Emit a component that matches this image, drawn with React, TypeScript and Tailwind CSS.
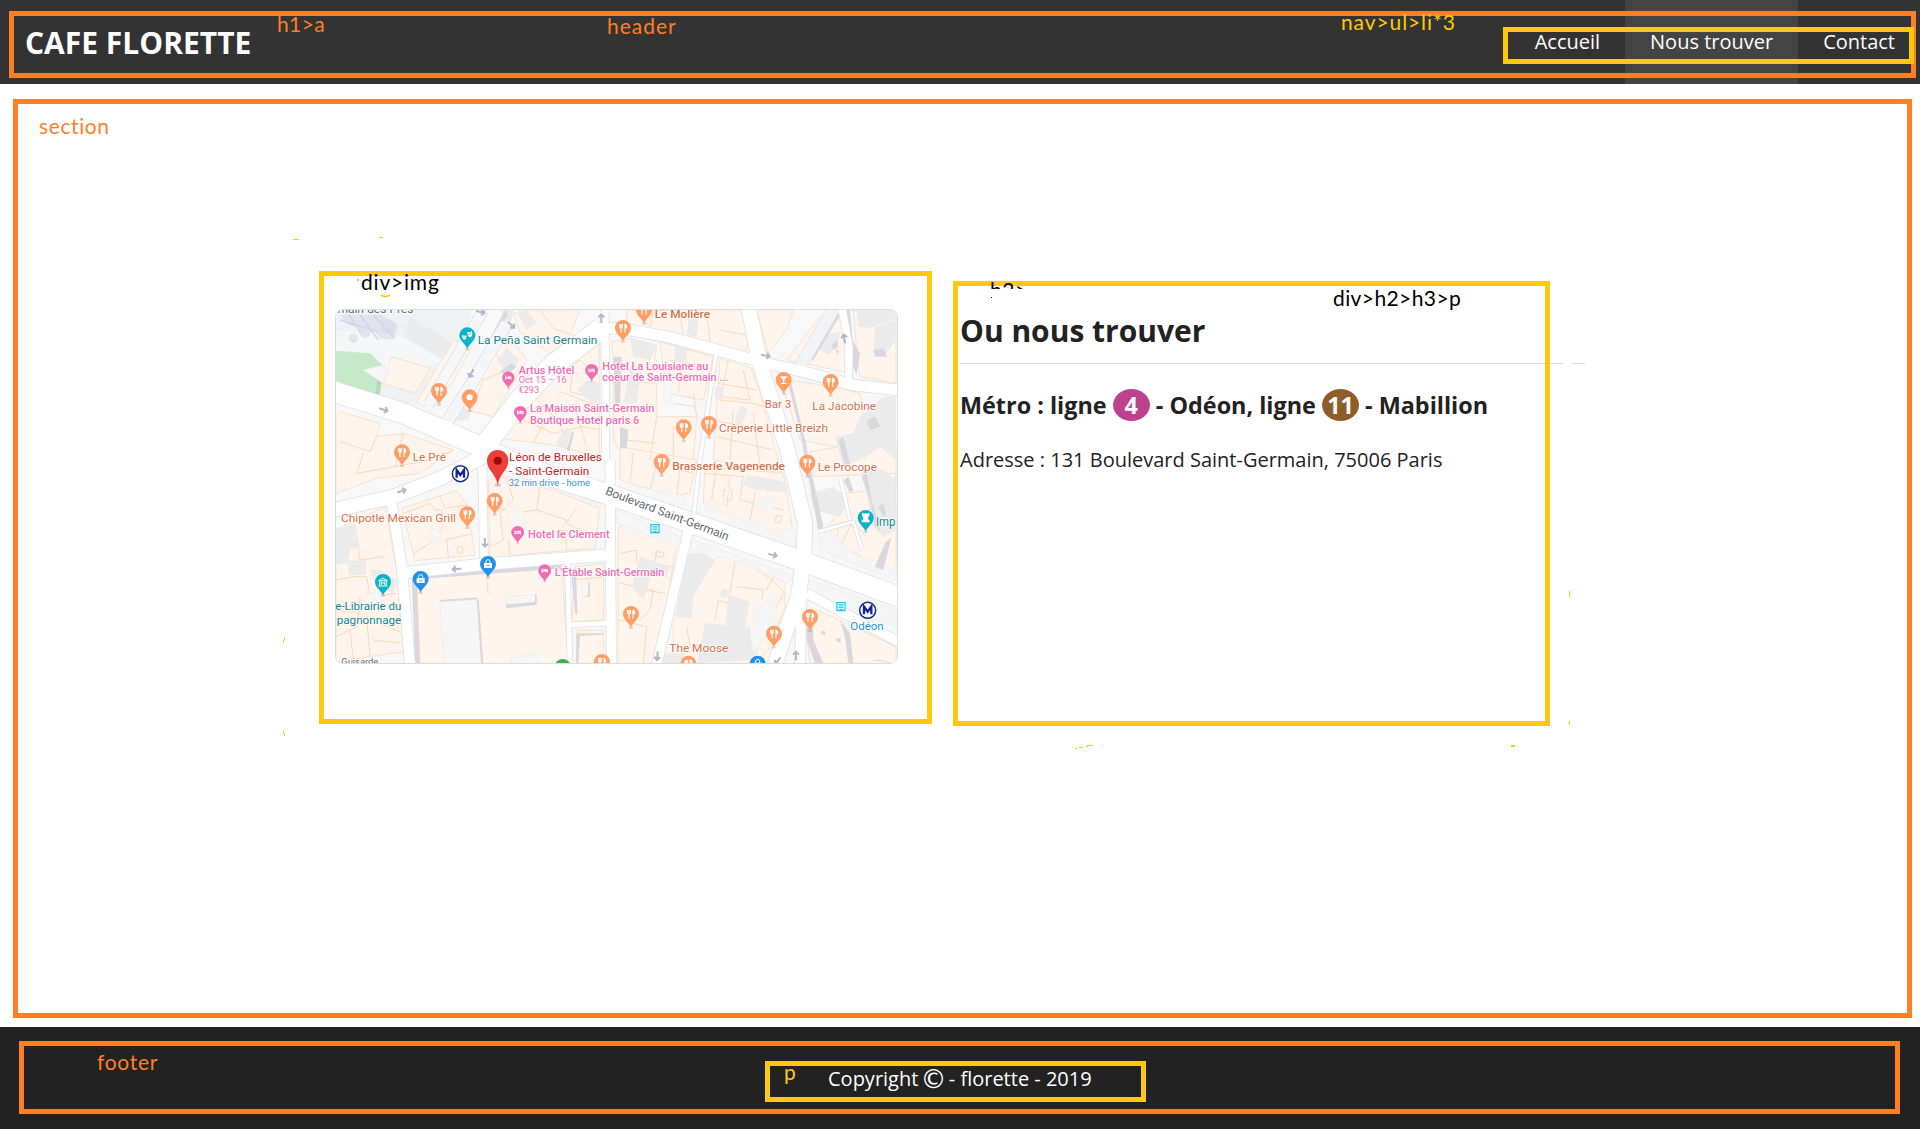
import React from "react";

/* ---------- Map drawing ---------- */

const ORANGE = "#ff9e67";
const BROWN = "#d2714f";
const PINK = "#f06db3";
const TEAL = "#12858f";

const peach = [
  "215,290 330,325 285,400 190,370", "400,240 455,262 395,372 310,440 290,425", "580,160 620,150 780,150 740,245 690,280 600,215",
  "500,260 585,250 620,300 520,470 400,440 450,340", "60,455 180,490 170,530 250,520 400,570 300,640 170,655 48,700 48,470",
  "800,240 838,220 838,330 770,320 740,290", "700,355 780,300 838,345 838,590 700,555 540,535 590,450",
  "875,245 930,235 1010,255 1000,330 900,330 880,300", "1020,245 1180,290 1150,420 1040,400", "920,150 1265,150 1285,240 1275,280 1100,235 920,190",
  "1200,295 1295,325 1320,400 1385,640 1180,600", "880,360 1010,370 1010,470 1130,470 1120,600 920,600 880,540",
  "1310,150 1420,150 1400,210 1345,280", "1500,170 1550,150 1580,250 1590,340 1500,320 1400,300", "1600,150 1728,150 1728,370 1620,350 1610,270",
  "1380,355 1560,385 1620,400 1640,520 1540,560 1440,540", "1470,575 1560,560 1728,560 1728,640 1480,650",
  "900,560 1130,600 1110,700 1060,708 900,660", "1155,620 1390,640 1420,820 1390,830 1150,735",
  "505,660 560,650 710,695 840,745 825,865 640,880 510,895", "245,745 410,692 440,735 465,885 285,902",
  "48,810 195,740 230,930 250,1175 48,1205", "290,950 725,920 745,1210 300,1210", "765,920 850,910 850,1080 755,1085", "770,1110 850,1110 850,1210 770,1210",
  "895,800 930,790 1070,855 1060,900 1020,1210 895,1210", "1190,890 1280,900 1395,965 1395,1040 1345,1170 1300,1210 1060,1210 1060,1090",
  "1580,700 1660,690 1728,730 1728,940 1660,920 1610,880 1520,860 1510,830", "1490,1050 1560,1080 1728,1160 1728,1210 1470,1210 1460,1120",
];

const parcels = [
  "60,545 150,575 170,530", "130,580 110,640 225,620 250,520", "225,620 330,600 400,570", "520,270 560,330 490,360 450,340", "490,360 455,450",
  "610,455 690,370 720,330", "640,405 720,490 740,565", "720,395 838,440", "760,325 750,395 838,420", "670,490 640,550", "760,430 800,560", "610,480 700,520 790,500 838,510",
  "660,150 700,205 770,230", "975,150 980,195", "1080,160 1090,230", "1160,150 1170,250", "990,200 1000,155 1040,150", "1200,210 1280,225",
  "1225,300 1200,420 1300,430 1330,440", "1195,370 1310,390", "1240,450 1230,600", "1300,460 1320,620", "1190,530 1360,570", "1270,330 1290,420 1200,410",
  "1050,300 1160,320", "1090,255 1075,400", "1120,400 1130,470", "1060,430 1130,440", "1010,470 990,600", "1060,500 1060,600", "920,540 1010,550", "1170,480 1280,500 1360,520",
  "1155,640 1270,650 1260,720 1390,750", "1190,620 1175,720", "1230,650 1220,740", "1305,700 1290,780", "1210,690 1235,690 1235,720 1210,720 1210,690", "1370,765 1385,770 1380,790 1365,785 1370,765",
  "1010,610 990,690", "940,580 930,670", "1120,640 1080,630 1070,708",
  "360,710 375,745 440,735", "250,760 330,730 345,750 365,750 370,800 330,850 280,880", "375,840 460,820", "380,840 385,890", "412,860 427,860 427,880 412,880 412,860",
  "560,655 580,720 540,760 550,840 510,860", "660,680 650,750 580,760", "770,740 740,790 820,830", "640,830 735,810 740,870", "510,740 560,750", "565,840 570,885", "650,750 740,780 725,805",
  "110,830 120,900 190,890", "48,960 100,950 140,950 150,1010 230,1000", "120,1010 110,1100 48,1130", "180,1090 250,1120", "90,1110 100,1200", "140,1070 150,1190", "200,950 240,990", "48,1050 120,1060", "160,1140 245,1150",
  "900,880 950,870 950,910 1060,920", "900,970 1000,990 990,1050 960,1080", "1010,870 1000,940", "1010,875 1032,878 1028,892 1008,890 1010,875", "975,990 1035,1000", "900,1080 980,1100 970,1210",
  "1245,905 1225,1030 1195,1020 1185,1080", "1250,980 1330,990 1325,1020", "1310,930 1350,955 1395,1000", "1395,965 1360,950 1340,990", "1390,1000 1350,1080", "1170,1090 1170,1210", "1100,1100 1110,1160 1160,1150",
  "1550,830 1560,790 1610,800 1640,830", "1560,860 1590,800", "1670,690 1690,800", "765,960 850,950", "500,960 505,1000",
];

const grey = [
  "270,170 400,250 370,300 250,230", "530,300 560,265 600,300 560,345", "590,160 620,150 650,190 620,210", "930,235 1010,255 990,300 940,290", "1110,150 1138,150 1130,230 1100,225", "1063,230 1105,240 1098,315 1065,305",
  "770,390 800,360 838,370 830,440", "705,550 740,500 755,515 735,570", "930,330 965,330 950,430 910,430", "1185,380 1210,380 1210,415 1185,415", "1250,460 1265,435 1285,450 1260,500 1245,490",
  "1480,260 1500,225 1560,215 1555,250 1530,285", "1665,200 1728,180 1728,240 1700,280 1660,275", "1610,150 1728,150 1728,175 1650,205 1615,200", "1545,530 1600,520 1620,470 1690,410 1728,405 1728,600 1680,560 1640,590 1570,620",
  "1280,645 1320,650 1390,665 1402,698 1310,690 1270,675", "1470,700 1540,680 1590,720 1560,770 1480,750", "1620,620 1690,630 1728,660 1728,810 1690,830 1650,790 1640,700", "1500,820 1530,805 1545,830 1510,838",
  "48,810 105,790 120,860 90,870 85,910 48,915", "85,900 138,902 138,945 85,945", "420,430 450,460 445,480 400,485", "960,890 1050,920 1040,950 995,945 970,1020 935,980", "1105,880 1150,880 1185,900 1155,950 1120,1010 1115,1075 1065,1070",
  "1205,985 1228,990 1220,1015 1200,1010", "1225,1005 1290,1025 1275,1100 1340,1110 1300,1200 1130,1210 1155,1090 1215,1095", "1030,1180 1095,1180 1085,1210 1030,1210", "150,930 180,930 230,960 220,1000 170,980", "545,150 580,150 575,180 550,190",
];

const pale = [
  "360,1025 475,1018 488,1210 370,1210", "558,1010 645,1003 645,1035 558,1045", "570,1195 655,1180 655,1210 570,1210", "785,965 808,965 808,1010 788,1010",
  "900,670 1100,710 1080,755 900,680", "1145,730 1370,820 1420,800 1430,860 1370,850 1130,770", "1490,770 1500,870 1728,960 1728,920 1600,885", "1470,960 1728,1050 1728,1100 1600,1060 1468,1005",
  "620,610 838,700 845,740 700,690", "890,750 1080,830 1070,860 890,790", "1120,840 1425,950 1400,970 1280,910 1110,870", "1300,730 1345,710 1330,675 1360,730 1355,750",
  "130,330 210,310 190,370", "330,800 365,820 360,845 330,850", "720,400 745,420 725,450 710,440", "1035,340 1060,350 1050,430 1030,420", "1205,740 1230,690 1220,680",
  "140,1000 180,1000 190,1035 150,1040", "560,760 600,740 620,790 580,800", "1285,1090 1325,1040 1345,1010 1375,1050 1350,1110 1300,1180",
];

const shadows = [
  "555,150 565,165 510,235", "1445,300 1480,300 1570,150 1560,150", "1680,1200 1728,1210 1650,1200", "1585,290 1610,345 1620,280 1598,240 1590,150 1580,150", "1448,560 1495,810 1510,800 1475,640 1455,540",
  "1570,660 1585,650 1600,690 1590,700", "1625,650 1650,720 1665,800 1680,810 1655,720 1640,640", "1450,1110 1485,1210 1510,1210 1480,1140 1478,1040", "1560,1080 1590,1120 1600,1210 1585,1210 1575,1130",
  "558,1033 645,1026 645,1003 650,1003 650,1034 558,1045", "360,1025 475,1018 470,1012 360,1020", "470,1020 483,1210 490,1210 476,1018", "275,950 550,915 725,915 725,925 290,958 300,1210 285,1210", "753,930 765,1060 772,1065 768,925",
  "770,1120 850,1120 850,1124 780,1128 775,1210 768,1210", "788,1010 810,1010 810,968 805,968 805,1005", "880,290 905,290 900,430 885,430", "740,570 756,515 762,520 748,575", "900,500 925,510 920,565 900,565", "1400,350 1412,360 1460,560 1450,560",
  "1555,540 1575,615 1590,612 1570,530", "1660,270 1690,265 1700,290 1665,290", "1535,255 1550,240 1555,260 1540,270", "1545,268 1558,272 1552,282", "1640,480 1665,470 1680,500 1650,510", "1675,740 1690,730 1700,765 1690,770", "1665,920 1695,850 1715,830 1690,930", "1505,1112 1515,1114 1515,1126 1502,1122",
  "1550,1135 1562,1135 1562,1148 1550,1145", "540,335 575,310 590,320 560,345",
];

const roads: [string, number, string][] = [
  ["490,150 325,435", 30, "#f4f6f8"], ["560,190 455,370 375,495", 34, "#f4f6f8"], ["1545,140 1440,320", 34, "#f1f4f7"],
  ["1188,285 1167,420 1140,600 1118,790", 10, "#fff"], ["1565,140 1587,260 1585,380", 22, "#fff"], ["1495,815 1600,785 1625,865", 8, "#fff"], ["1590,780 1560,650", 8, "#fff"],
  ["742,905 750,1210", 14, "#fff"], ["748,1094 865,1090", 14, "#fff"], ["855,140 857,600", 22, "#fff"], ["870,600 874,1215", 28, "#fff"],
  ["487,620 492,900", 24, "#fff"], ["215,725 245,920 270,1215", 30, "#fff"], ["255,938 500,912 870,885", 34, "#fff"], ["40,750 220,710 350,660 500,585", 42, "#fff"],
  ["1110,790 1070,960 1010,1215", 28, "#fff"], ["1460,1000 1735,1145", 28, "#fff"],
  ["835,205 900,205 1050,232 1340,310 1450,335 1600,375 1735,390", 32, "#fff"], ["845,205 700,315 600,420 480,575", 62, "#fff"],
  ["1285,140 1322,320 1400,560 1455,790 1452,890 1435,1010 1395,1120 1365,1215", 44, "#fff"], ["1445,980 1440,1215", 30, "#fff"], ["1735,960 1728,640", 2, "#fff"],
  ["40,395 250,460 470,555 620,625 900,715 1450,905 1735,1010", 60, "#fff"],
];

type PinKind = "food" | "bar" | "dot" | "bed" | "mask" | "museum" | "rook" | "bag" | "plain";

function Glyph({ kind }: { kind: PinKind }) {
  switch (kind) {
    case "food":
      return (
        <g fill="none" stroke="#fff" strokeWidth="3.4">
          <path d="M-10-12v8q0 4 4 4t4-4v-8M-6-12V14" />
          <path d="M6 14V-11q6 1 5 10l-5 2" fill="#fff" />
        </g>
      );
    case "bar":
      return <path d="M-11-11H11L2 0V9H8V12H-8V9H-2V0Z" fill="#fff" />;
    case "dot":
      return <circle r="9" fill="#fff" />;
    case "bed":
      return (
        <g fill="#fff">
          <path d="M-12-8h3V2H9V-5h3V8H9V5H-9V8h-3Z" />
          <circle cx="-5" cy="-2" r="3" />
          <path d="M-1-6H6Q9-6 9-2V1H-1Z" />
        </g>
      );
    case "mask":
      return (
        <g fill="#fff">
          <path d="M-16-1Q-9 3-3 0V7Q-5 14-10 13Q-16 11-16-1Z" />
          <path d="M-1-11Q6-6 14-13L15-4Q14 6 7 6Q1 5-1-11Z" />
          <g fill="#08b4c6">
            <circle cx="-12" cy="5" r="1.6" />
            <circle cx="-7" cy="5" r="1.6" />
            <circle cx="5" cy="-3" r="1.6" />
            <circle cx="10" cy="-5" r="1.6" />
          </g>
        </g>
      );
    case "museum":
      return (
        <g fill="none" stroke="#fff" strokeWidth="3">
          <path d="M-13-4L0-12L13-4ZM-10-3V10M10-3V10M-14 12H14M-5 9V0L0 4L5 0V9" />
        </g>
      );
    case "rook":
      return <path d="M-11-15h5v4h3v-4h6v4h3v-4h5v10L7-3 9 7h3v6h-24V7h3L-7-3l-4-2Z" fill="#fff" />;
    case "bag":
      return (
        <g>
          <path d="M-12-3H12V12H-12Z" fill="#fff" />
          <path d="M-6-2V-8Q-5-13 0-13T6-8V-2" fill="none" stroke="#fff" strokeWidth="3" />
          <path d="M-5 3Q0 9 5 3" fill="none" stroke="#2491eb" strokeWidth="2.4" />
        </g>
      );
    default:
      return null;
  }
}

function Pin({ x, y, kind, fill, s = 1 }: { x: number; y: number; kind: PinKind; fill: string; s?: number }) {
  return (
    <g transform={`translate(${x} ${y}) scale(${s})`}>
      <ellipse cx="0" cy="41" rx="7" ry="4" fill="#000" opacity=".13" />
      <path d="M0 41C-3 28-24 17-24 0A24 24 0 0 1 24 0C24 17 3 28 0 41Z" fill={fill} />
      <Glyph kind={kind} />
    </g>
  );
}

const pins: [number, number, PinKind, string, number?][] = [
  [357, 393, "food", ORANGE], [449, 412, "dot", ORANGE], [246, 577, "food", ORANGE], [909, 204, "food", ORANGE], [972, 150, "food", ORANGE],
  [1391, 360, "bar", ORANGE], [1532, 366, "food", ORANGE], [1091, 502, "food", ORANGE], [1167, 492, "food", ORANGE], [1025, 606, "food", ORANGE],
  [1462, 608, "food", ORANGE], [524, 723, "food", ORANGE], [442, 763, "food", ORANGE], [933, 1062, "food", ORANGE], [1362, 1121, "food", ORANGE],
  [1470, 1071, "food", ORANGE], [1105, 1211, "food", ORANGE], [846, 1206, "food", ORANGE],
  [565, 353, "bed", PINK, 0.77], [815, 331, "bed", PINK, 0.8], [601, 457, "bed", PINK, 0.8], [593, 817, "bed", PINK, 0.8], [674, 932, "bed", PINK, 0.8],
  [442, 226, "mask", "#08b4c6"], [189, 966, "museum", "#08b4c6"], [1637, 774, "rook", "#08b4c6"],
  [302, 957, "bag", "#2491eb"], [504, 912, "bag", "#2491eb"], [1313, 1211, "bag", "#2491eb"], [728, 1221, "plain", "#3aaf4a"],
];

const arrows: [number, number, number][] = [
  [482, 156, 12], [574, 195, 45], [844, 175, -90], [454, 340, 120], [191, 449, 18], [245, 693, -18], [495, 848, 90], [410, 927, 178],
  [1337, 287, 10], [1573, 236, -100], [1358, 885, 14], [1012, 1188, 95], [1373, 1203, 130], [1428, 1187, -90],
];

const labels: [string, number, number, number, number, string, number][] = [
  ["main-des-Prés", 53, 158, 227, 33, "#5b6b75", 400],
  ["La Peña Saint Germain", 473, 251, 359, 35, TEAL, 400],
  ["Artus Hôtel", 596, 342, 167, 32, PINK, 500],
  ["Oct 15 – 16", 596, 370, 144, 29, PINK, 400],
  ["€293", 596, 399, 61, 29, PINK, 400],
  ["Hotel La Louisiane au", 847, 331, 318, 32, PINK, 500],
  ["coeur de Saint-Germain ...", 847, 363, 378, 32, PINK, 500],
  ["La Maison Saint-Germain", 630, 457, 373, 33, PINK, 500],
  ["Boutique Hotel paris 6", 630, 491, 328, 33, PINK, 500],
  ["Le Molière", 1004, 175, 166, 34, BROWN, 500],
  ["Bar 3", 1334, 444, 80, 34, BROWN, 400],
  ["La Jacobine", 1477, 451, 191, 34, BROWN, 400],
  ["Crêperie Little Breizh", 1197, 516, 327, 34, BROWN, 400],
  ["Brasserie Vagenende", 1057, 629, 338, 34, BROWN, 500],
  ["Le Procope", 1493, 632, 178, 35, BROWN, 400],
  ["Le Pré", 278, 602, 100, 34, BROWN, 400],
  ["Léon de Bruxelles", 567, 603, 279, 34, "#c4231f", 400],
  ["- Saint-Germain", 567, 645, 241, 34, "#c4231f", 400],
  ["32 min drive - home", 566, 678, 244, 27, "#3c8fd9", 400],
  ["Chipotle Mexican Grill", 63, 786, 345, 34, BROWN, 400],
  ["Hotel le Clement", 624, 834, 245, 33, PINK, 500],
  ["L'Étable Saint-Germain", 704, 948, 329, 33, PINK, 500],
  ["e-Librairie du", 46, 1050, 198, 35, TEAL, 400],
  ["pagnonnage", 50, 1091, 194, 35, TEAL, 400],
  ["Imp", 1668, 798, 58, 36, TEAL, 400],
  ["Odéon", 1591, 1110, 100, 34, "#1699cc", 400],
  ["The Moose", 1048, 1176, 177, 34, BROWN, 400],
  ["Guisarde", 64, 1216, 111, 28, "#5b6b75", 400],
];

function Metro({ x, y }: { x: number; y: number }) {
  return (
    <g transform={`translate(${x} ${y})`}>
      <circle r="24" fill="#fff" stroke="#12268c" strokeWidth="4.5" />
      <path d="M-11 12V-11L0 4L11-11V12" fill="none" stroke="#12268c" strokeWidth="7" />
    </g>
  );
}

function Bus({ x, y }: { x: number; y: number }) {
  return (
    <g transform={`translate(${x} ${y})`}>
      <path d="M-14-14H14V14H-14Z" fill="#1cc4f4" />
      <path d="M-9 10V-9H9V10M-9 5H9M-9-2H9M-6 9h2M4 9h2" fill="none" stroke="#fff" strokeWidth="3" />
    </g>
  );
}

function MapPicture() {
  return (
    <svg viewBox="48 150 1683 1059" preserveAspectRatio="none" className="block h-[353px] w-[561px]">
      <rect x="40" y="140" width="1700" height="1080" fill="#f7f8f7" />
      <path d="M48 150H455L430 250 290 440 48 362Z" fill="#f0f1f3" />
      <path d="M48 210L250 230 380 300 200 350 48 300Z" fill="#f5f6f8" />
      <g fill="#e3e3ef">
        <path d="M60 165H185L235 195 220 240 180 235 165 215 85 195Z" />
        <circle cx="135" cy="215" r="18" />
        <circle cx="100" cy="235" r="14" />
        <circle cx="205" cy="200" r="22" fill="#dcdcec" />
      </g>
      <path d="M60 180L175 215M85 160L120 215M120 165L175 240M160 165L225 235" stroke="#d2d3e4" strokeWidth="4" />
      <path d="M48 272L150 280 192 320 178 410 48 362Z" fill="#c5e8c9" />
      <path d="M192 320L178 410 165 405 178 312Z" fill="#b5d9bd" />
      <g fill="#fff5ec" stroke="#fce0c8" strokeWidth="3">
        {peach.map((p) => <polygon key={p} points={p} />)}
      </g>
      <g fill="none" stroke="#fbd9bb" strokeWidth="3">
        {parcels.map((p) => <polyline key={p} points={p} />)}
      </g>
      <g fill="#ebebec">{grey.map((p) => <polygon key={p} points={p} />)}</g>
      <g fill="#f5f6f5" stroke="#eceeed" strokeWidth="2">{pale.map((p) => <polygon key={p} points={p} />)}</g>
      <g fill="#d9d8de">{shadows.map((p) => <polygon key={p} points={p} />)}</g>
      <g fill="none" stroke="#dfe2e4" strokeLinejoin="round">
        {roads.map(([p, w]) => <polyline key={p} points={p} strokeWidth={w + 5} />)}
      </g>
      <g fill="none" strokeLinejoin="round">
        {roads.map(([p, w, c]) => <polyline key={p} points={p} strokeWidth={w} stroke={c} />)}
      </g>
      <g fill="none" stroke="#b1b7cf" strokeWidth="6">
        {arrows.map(([x, y, a]) => (
          <path key={`${x}-${y}`} transform={`translate(${x} ${y}) rotate(${a})`} d="M-14 0H10M3-9L12 0L3 9" />
        ))}
      </g>
      {pins.map(([x, y, kind, fill, s]) => <Pin key={`${x}-${y}`} x={x} y={y} kind={kind} fill={fill} s={s} />)}
      <Metro x={421} y={641} />
      <Metro x={1643} y={1051} />
      <Bus x={1005} y={806} />
      <Bus x={1563} y={1040} />
      <ellipse cx="533" cy="675" rx="9" ry="5" fill="#000" opacity=".2" />
      <path d="M533 676C529 640 501 632 501 602A32 32 0 0 1 565 602C565 632 537 640 533 676Z" fill="#ee3f37" />
      <circle cx="533" cy="602" r="12" fill="#9c0a10" />
      <g fontFamily="Roboto, sans-serif" stroke="#fff" strokeWidth="5" strokeOpacity=".85" strokeLinejoin="round" paintOrder="stroke">
        {labels.map(([t, x, y, w, size, fill, weight]) => (
          <text key={t} x={x} y={y} textLength={w} lengthAdjust="spacingAndGlyphs" fontSize={size} fontWeight={weight} fill={fill}>
            {t}
          </text>
        ))}
        <text transform="translate(854 702) rotate(20.8)" textLength="393" lengthAdjust="spacingAndGlyphs" fontSize="35" fill="#5b6b75">
          Boulevard Saint-Germain
        </text>
      </g>
    </svg>
  );
}

/* ---------- Page ---------- */

function Note({ className, children }: { className: string; children: React.ReactNode }) {
  return (
    <span
      className={`pointer-events-none block shrink-0 whitespace-nowrap font-['Lato',sans-serif] text-[21px] leading-6 [font-variant-ligatures:none] ${className}`}
    >
      {children}
    </span>
  );
}

/* Small pen strokes scattered around the two cards */
function Strokes() {
  return (
    <svg viewBox="0 0 1920 943" className="pointer-events-none absolute inset-0 h-full w-full" shapeRendering="crispEdges">
      <g fill="#ffc90e">
        <path d="M293 155h6v1h-6zM379 153h4v1h-4zM357 195h2v2h-2zM358 191h1v1h-1zM283 556h1v3h-1zM284 553h1v3h-1zM283 647h1v2h-1zM284 649h1v3h-1z" />
        <path d="M1569 507h1v6h-1zM1569 637h1v4h-1zM1075 664h2v1h-2zM1079 663h4v1h-4zM1086 662h2v1h-2zM1087 661h6v1h-6zM1511 661h4v2h-4z" />
      </g>
      <path d="M381 211q4 3 9 0" fill="none" stroke="#ffc90e" strokeWidth="1.6" shapeRendering="auto" />
      <path d="M1550 279h13v1h-13zM1571 279h14v1h-14z" fill="#ddd" />
      <path d="M991 213h1v1h-1z" fill="#000" />
    </svg>
  );
}

export default function App() {
  return (
    <div className="flex h-[1129px] w-[1920px] flex-col overflow-hidden bg-white font-['Open_Sans',sans-serif] text-xl text-[#222]">
      <header className="relative flex h-[84px] shrink-0 items-stretch justify-between bg-[#333] text-white">
        <h1 className="flex items-center pl-[25px] pt-0.5 text-[30px] font-bold">
          <a href="#">CAFE FLORETTE</a>
        </h1>
        <nav>
          <ul className="flex h-full">
            <li className="flex items-center px-[25px]">Accueil</li>
            <li className="flex items-center bg-[#444] px-[25px]">Nous trouver</li>
            <li className="flex items-center px-[25px]">Contact</li>
          </ul>
        </nav>
        <div className="pointer-events-none absolute left-[9px] top-[11px] flex h-[67px] w-[1907px] border-[5px] border-[#ff7f27]">
          <Note className="-mt-1 w-[330px] pl-[263px] tracking-[0.4px] text-[#ff7f27]">h1&gt;a</Note>
          <Note className="-mt-0.5 w-[734px] pl-[263px] tracking-[1px] text-[#ff7f27]">header</Note>
          <Note className="-mt-1.5 w-[425px] pl-[263px] tracking-[0.9px] text-[#ffc90e]">nav&gt;ul&gt;li*3</Note>
          <div className="mt-[11px] h-[37px] w-[411px] shrink-0 border-[5px] border-[#ffc90e]" />
        </div>
      </header>

      <section className="relative h-[943px] shrink-0 pl-[13px] pt-[15px]">
        <div className="h-[919px] w-[1899px] border-[5px] border-[#ff7f27]">
          <Note className="pl-[21px] pt-[10px] tracking-[0.6px] text-[#ff7f27]">section</Note>
          <div className="flex gap-[21px] pl-[301px] pt-[133px]">
            <div className="h-[453px] w-[613px] border-[5px] border-[#ffc90e] pl-[11px]">
              <Note className="-mt-1.5 pl-[26px] tracking-[0.8px] text-black">div&gt;img</Note>
              <div className="mt-[15px] h-[355px] w-[563px] overflow-hidden rounded-lg border border-[#ddd]">
                <MapPicture />
              </div>
            </div>
            <div className="mt-2.5 h-[445px] w-[597px] border-[5px] border-[#ffc90e] pl-0.5">
              <div className="flex">
                <div className="-mt-[5px] ml-[30px] h-[8px] w-[343px] overflow-hidden">
                  <Note className="-mt-[3px] tracking-[0.5px] text-black">h2&gt;</Note>
                </div>
                <Note className="tracking-[0.4px] text-black">div&gt;h2&gt;h3&gt;p</Note>
              </div>
              <h2 className="h-[54px] border-b border-[#ddd] text-[30px] font-bold leading-[42px]">Ou nous trouver</h2>
              <h3 className="mt-[23px] h-9 text-[23.4px] font-bold leading-9">
                Métro : ligne{" "}
                <span className="inline-block h-8 w-[37px] rounded-[50%] bg-[#be418d] text-center leading-8 text-white">4</span> - Odéon, ligne{" "}
                <span className="inline-block h-8 w-[37px] rounded-[50%] bg-[#8d5e2a] text-center leading-8 text-white">11</span> - Mabillion
              </h3>
              <p className="mt-[23px]">Adresse : 131 Boulevard Saint-Germain, 75006 Paris</p>
            </div>
          </div>
        </div>
        <Strokes />
      </section>

      <footer className="h-[102px] shrink-0 bg-[#222] pl-[19px] pt-[14px] text-white">
        <div className="flex h-[73px] w-[1881px] border-[5px] border-[#ff7f27]">
          <Note className="w-[741px] pl-[73px] pt-1 tracking-[0.7px] text-[#ff7f27]">footer</Note>
          <div className="mt-[15px] flex h-[41px] w-[381px] border-[5px] border-[#ffc90e]">
            <Note className="-mt-1.5 w-[58px] pl-3.5 text-[#ffc90e]">p</Note>
            <p className="mt-px whitespace-nowrap leading-6">
              Copyright{" "}
              <span className="-mx-[3px] align-[-2px] font-['DejaVu_Sans',sans-serif] text-[26px] leading-[0px]">©</span> - florette - 2019
            </p>
          </div>
        </div>
      </footer>
    </div>
  );
}
